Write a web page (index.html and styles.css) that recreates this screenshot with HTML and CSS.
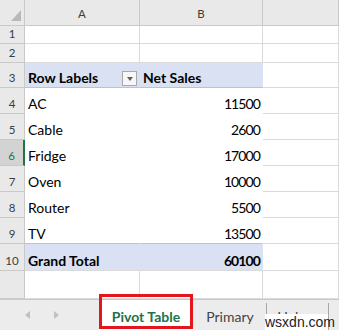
FILE: index.html
```html
<!DOCTYPE html>
<html lang="en">
<head>
<meta charset="UTF-8">
<meta name="viewport" content="width=device-width, initial-scale=1.0">
<title>Pivot Table</title>
<link rel="stylesheet" href="styles.css">
</head>
<body>
<div class="sheet">
    <!-- grid of cells -->
    <div class="grid">
        <div class="corner"><span class="tri"></span></div>
        <div class="colhead">A</div>
        <div class="colhead">B</div>
        <div class="colhead"></div>

        <div class="rowhead">1</div>
        <div class="cell"></div><div class="cell"></div><div class="cell"></div>

        <div class="rowhead">2</div>
        <div class="cell"></div><div class="cell"></div><div class="cell"></div>

        <div class="rowhead">3</div>
        <div class="cell pv-head bold">Row Labels<span class="filter"><span class="arrow"></span></span></div>
        <div class="cell pv-head bold">Net Sales</div>
        <div class="cell"></div>

        <div class="rowhead">4</div>
        <div class="cell pv">AC</div><div class="cell pv num">11500</div><div class="cell"></div>

        <div class="rowhead">5</div>
        <div class="cell pv">Cable</div><div class="cell pv num">2600</div><div class="cell"></div>

        <div class="rowhead active">6</div>
        <div class="cell pv">Fridge</div><div class="cell pv num">17000</div><div class="cell"></div>

        <div class="rowhead">7</div>
        <div class="cell pv">Oven</div><div class="cell pv num">10000</div><div class="cell"></div>

        <div class="rowhead">8</div>
        <div class="cell pv">Router</div><div class="cell pv num">5500</div><div class="cell"></div>

        <div class="rowhead">9</div>
        <div class="cell pv last">TV</div><div class="cell pv last num">13500</div><div class="cell"></div>

        <div class="rowhead">10</div>
        <div class="cell pv-total bold">Grand Total</div>
        <div class="cell pv-total bold num">60100</div>
        <div class="cell"></div>

        <div class="rowhead"></div>
        <div class="cell"></div><div class="cell"></div><div class="cell"></div>
    </div>

    <!-- sheet tabs -->
    <div class="tabs">
        <div class="nav">
            <span class="nav-left"></span>
            <span class="nav-right"></span>
        </div>
        <div class="tab current">Pivot Table</div>
        <div class="tab">Primary</div>
        <div class="tab">Helper</div>
    </div>

    <div class="callout"></div>
    <div class="watermark">wsxdn.com</div>
</div>
</body>
</html>
```

FILE: styles.css
```css
* {
    box-sizing: border-box;
}

body {
    margin: 0;
    font-family: "Lato", "Liberation Sans", sans-serif;
    background: #fff;
}

.sheet {
    position: relative;
    width: 339px;
    height: 330px;
    overflow: hidden;
}

.grid {
    display: grid;
    grid-template-columns: 25px 115px 123px 1fr;
    grid-template-rows: 26px 18px 19px 25px repeat(6, 26px) 27px 28px;
}

.corner,
.colhead,
.rowhead {
    background: #e9e9e9;
    border-right: 1px solid #c9c9c9;
    border-bottom: 1px solid #c9c9c9;
    color: #3c3c3c;
    font-size: 11.5px;
    line-height: 13px;
    display: flex;
    justify-content: center;
    align-items: flex-end;
}

.colhead {
    padding-bottom: 5px;
}

.rowhead {
    padding-bottom: 3px;
}

.rowhead.active {
    background: #d3d3d3;
    color: #217346;
    border-right: 2px solid #217346;
}

.corner {
    justify-content: flex-end;
    padding: 0 3px 4px 0;
}

.tri {
    width: 0;
    height: 0;
    border-left: 10px solid transparent;
    border-bottom: 11px solid #b9b9b9;
}

.cell {
    border-right: 1px solid #dadada;
    border-bottom: 1px solid #dadada;
    font-size: 14px;
    line-height: 17px;
    color: #000;
    display: flex;
    align-items: flex-end;
    padding: 0 2px 1px 3px;
    white-space: nowrap;
}

.bold {
    font-weight: bold;
}

.num {
    justify-content: flex-end;
    letter-spacing: -0.9px;
}

.pv {
    border-color: #fff;
}

.pv.last {
    border-bottom-color: #b4c3e2;
}

.pv-head {
    background: #d9e1f2;
    border-right-color: #d9e1f2;
    border-bottom-color: #b4c3e2;
}

.pv-total {
    background: #d9e1f2;
    border-right-color: #d9e1f2;
}

.filter {
    margin-left: auto;
    width: 15px;
    height: 15px;
    border: 1px solid #a9a9a9;
    background: #f7f7f7;
    display: flex;
    justify-content: center;
    align-items: center;
}

.arrow {
    width: 0;
    height: 0;
    border-left: 3px solid transparent;
    border-right: 3px solid transparent;
    border-top: 4px solid #606060;
}

.tabs {
    height: 31px;
    background: #ececec;
    border-top: 1px solid #c9c9c9;
    display: flex;
    font-size: 14px;
    color: #444;
}

.nav {
    width: 99px;
    display: flex;
    align-items: center;
    padding-left: 25px;
    gap: 24px;
}

.nav-left {
    width: 0;
    height: 0;
    border-top: 4px solid transparent;
    border-bottom: 4px solid transparent;
    border-right: 5px solid #c0c0c0;
}

.nav-right {
    width: 0;
    height: 0;
    border-top: 4px solid transparent;
    border-bottom: 4px solid transparent;
    border-left: 5px solid #c0c0c0;
}

.tab {
    display: flex;
    align-items: center;
    justify-content: center;
    padding-top: 2px;
    position: relative;
}

.tab::after {
    content: "";
    position: absolute;
    right: 0;
    top: 3px;
    bottom: 0;
    border-right: 1px solid #a8a8a8;
}

.tab.current {
    width: 94px;
    background: #fff;
    color: #217346;
    font-weight: bold;
}

.tab.current::after {
    display: none;
}

.tab:nth-child(3) {
    width: 74px;
}

.tab:nth-child(4) {
    width: 62px;
}

.callout {
    position: absolute;
    left: 99px;
    top: 294px;
    width: 94px;
    height: 35px;
    border: 3px solid #e3161d;
}

.watermark {
    position: absolute;
    left: 265px;
    top: 314px;
    width: 63px;
    height: 16px;
    background: #fff;
    font-family: "Liberation Sans", sans-serif;
    font-size: 14px;
    line-height: 16px;
    color: #222;
    text-align: center;
}
```
